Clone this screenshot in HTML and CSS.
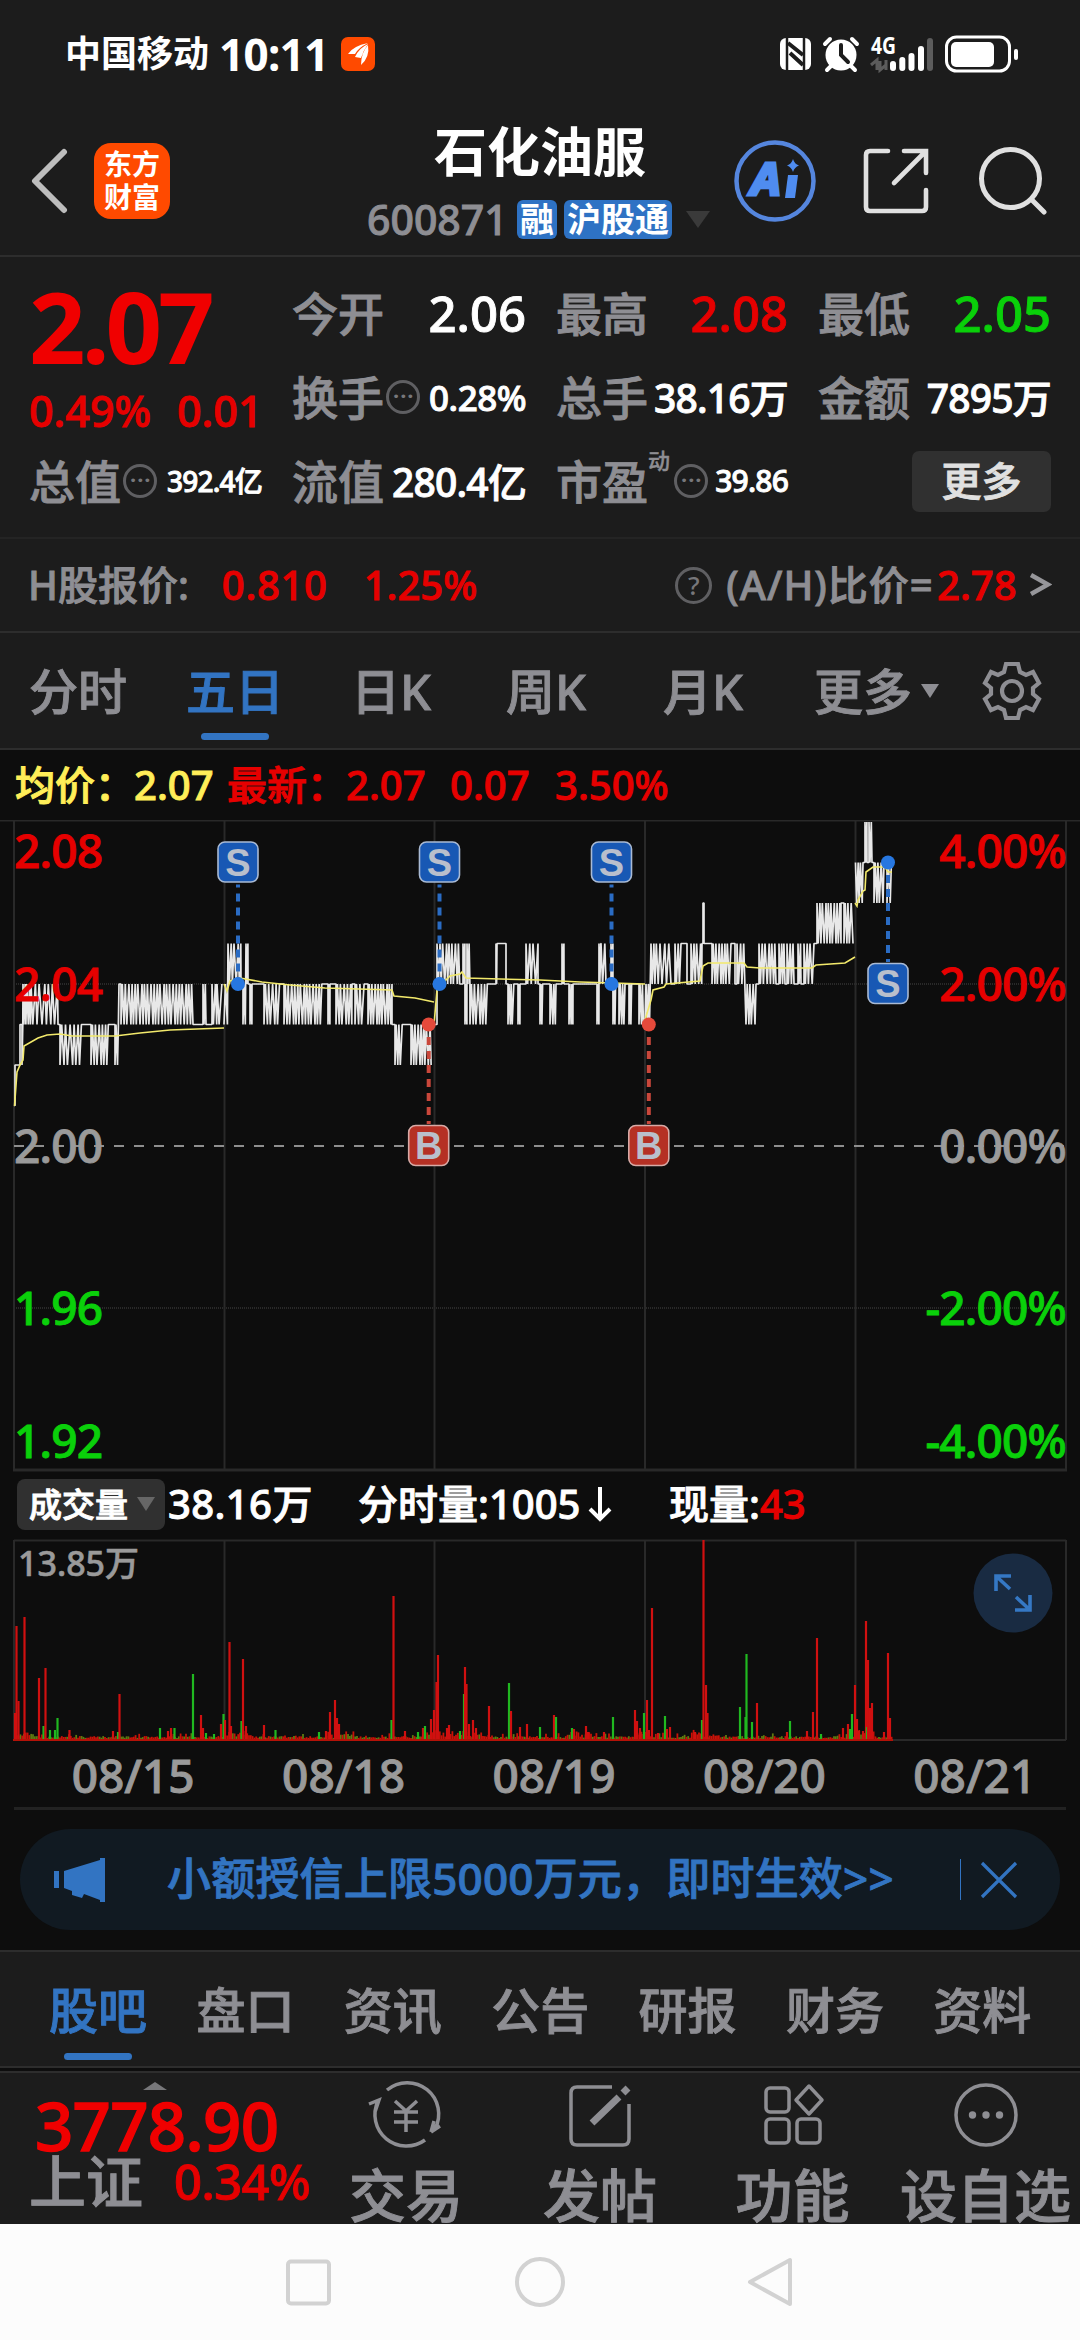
FILE: index.html
```html
<!DOCTYPE html>
<html lang="zh-CN">
<head>
    <meta charset="UTF-8">
    <meta name="viewport" content="width=device-width, initial-scale=1.0">
    <title>石化油服 600871</title>
    <link rel="stylesheet" href="styles.css">
</head>
<body>
    <div class="statusbar">
        <span class="carrier">中国移动</span>
        <span class="clock">10:11</span>
        <svg class="push-icon" width="34" height="34" viewBox="0 0 34 34">
            <rect width="34" height="34" rx="7" fill="#ff4a00"/>
            <path d="M7 17Q12 9 27 6Q17 11 14 17ZM14 20Q18 11 27 7Q22 14 20 21ZM20 28Q20 16 27 8Q29 20 20 28Z" fill="#fff"/>
        </svg>
        <svg class="status-icons" width="240" height="40" viewBox="0 0 240 40">
            <rect x="0" y="4" width="31" height="32" rx="6" fill="#fff"/>
            <path d="M7 3V36M24 4V37" stroke="#1c1c1c" stroke-width="2.5"/>
            <path d="M8 9L23 21M10 19L23 31" stroke="#1c1c1c" stroke-width="4"/>
            <circle cx="61" cy="21" r="15.5" fill="#fff"/>
            <path d="M45 10L50 5M77 10L72 5M47 36L52 31M75 36L70 31" stroke="#fff" stroke-width="4" stroke-linecap="round"/>
            <path d="M61 11V21L68 28" stroke="#1c1c1c" stroke-width="4" fill="none" stroke-linecap="round"/>
            <text class="net" x="91" y="20" textLength="25" lengthAdjust="spacingAndGlyphs">4G</text>
            <path d="M91 31L97 26V36M106 36V26M100 27V36L106 31" stroke="#5c5c5c" stroke-width="3" fill="none"/>
            <path d="M113 30V34M122.300 26V34M131.500 22V34M141 15V34" stroke="#fff" stroke-width="6" stroke-linecap="round"/>
            <path d="M150 7V34" stroke="#5c5c5c" stroke-width="6" stroke-linecap="round"/>
            <rect x="166.500" y="3" width="63" height="34" rx="10" fill="none" stroke="#fff" stroke-width="3"/>
            <rect x="171" y="8" width="43" height="25" rx="5" fill="#fff"/>
            <rect x="234" y="15" width="4" height="11" rx="2" fill="#fff"/>
        </svg>
    </div>

    <div class="header">
        <svg class="back" width="38" height="66" viewBox="0 0 38 66">
            <path d="M34 4L5 33L34 62" fill="none" stroke="#bdbdbd" stroke-width="6" stroke-linecap="round" stroke-linejoin="round"/>
        </svg>
        <div class="brand"><span>东方</span><span>财富</span></div>
        <div class="title">
            <h1>石化油服</h1>
            <div class="code">
                <span>600871</span>
                <b class="tag">融</b>
                <b class="tag">沪股通</b>
                <i class="tri tri-code"></i>
            </div>
        </div>
        <div class="header-icons">
            <svg width="82" height="82" viewBox="0 0 82 82">
                <circle cx="41" cy="41" r="38.500" fill="none" stroke="#5586de" stroke-width="4.500"/>
                <text class="ai" x="17" y="55" textLength="30" lengthAdjust="spacingAndGlyphs">A</text>
                <path d="M54 35H64L61 58H51Z" fill="#4f8cf0"/>
                <path d="M59 19Q60.500 24 65 25.500Q60.500 27 59 32Q57.500 27 53 25.500Q57.500 24 59 19Z" fill="#4f8cf0"/>
            </svg>
            <svg width="66" height="66" viewBox="0 0 66 66">
                <path d="M25 3H7Q3 3 3 7V59Q3 63 7 63H59Q63 63 63 59V42M41 3H63V25M62 4L31 35" fill="none" stroke="#e0e0e0" stroke-width="4.600" stroke-linecap="round"/>
            </svg>
            <svg width="68" height="68" viewBox="0 0 68 68">
                <circle cx="31.500" cy="31.500" r="29" fill="none" stroke="#e0e0e0" stroke-width="5"/>
                <path d="M53 53L65 65" stroke="#e0e0e0" stroke-width="5" stroke-linecap="round"/>
            </svg>
        </div>
    </div>

    <div class="quote">
        <div class="price">
            <div class="last">2.07</div>
            <div class="change"><span>0.49%</span><span>0.01</span></div>
        </div>
        <div class="cell c-open"><label>今开</label><span class="v-lg">2.06</span></div>
        <div class="cell"><label>最高</label><span class="v-lg red">2.08</span></div>
        <div class="cell"><label>最低</label><span class="v-lg green">2.05</span></div>
        <div class="cell"><label>换手</label><i class="dots">•••</i><span class="v-sm">0.28%</span></div>
        <div class="cell"><label>总手</label><span class="v-md">38.16万</span></div>
        <div class="cell"><label>金额</label><span class="v-md">7895万</span></div>
        <div class="cell"><label>总值</label><i class="dots">•••</i><span class="v-xs">392.4亿</span></div>
        <div class="cell"><label>流值</label><span class="v-md">280.4亿</span></div>
        <div class="cell"><label>市盈</label><sup>动</sup><i class="dots">•••</i><span class="v-xs pe">39.86</span></div>
        <div class="cell"><button class="more">更多</button></div>
    </div>

    <div class="hshare">
        <span class="grey">H股报价:</span>
        <span class="red h-price">0.810</span>
        <span class="red h-rate">1.25%</span>
        <i class="help">?</i>
        <span class="grey ratio">(A/H)比价=</span><span class="red h-ah">2.78</span>
        <svg width="24" height="28" viewBox="0 0 24 28"><path d="M3 4L20 13.500L3 23" fill="none" stroke="#96969a" stroke-width="4.500"/></svg>
    </div>

    <div class="tabs">
        <span>分时</span>
        <span class="active">五日</span>
        <span>日K</span>
        <span>周K</span>
        <span>月K</span>
        <span class="tab-more">更多<i class="tri tri-tab"></i></span>
        <svg width="60" height="62" viewBox="-30 -31 60 62" fill="none" stroke="#8e8e93" stroke-width="4.200">
            <path d="M-6 -27H6L8 -19L14 -16L21 -19L27 -8L21 -3V3L27 8L21 19L14 16L8 19L6 27H-6L-8 19L-14 16L-21 19L-27 8L-21 3V-3L-27 -8L-21 -19L-14 -16L-8 -19Z"/>
            <circle r="10"/>
        </svg>
    </div>

    <div class="info">
        <span class="yellow">均价：</span><span class="yellow i-avg">2.07</span>
        <span class="red i-new">最新：</span><span class="red i-last">2.07</span>
        <span class="red i-diff">0.07</span>
        <span class="red i-rate">3.50%</span>
    </div>

    <svg id="priceChart" class="chart" width="1080" height="652" viewBox="0 820 1080 652"></svg>

    <div class="volinfo">
        <span class="vol-btn">成交量<i class="tri tri-vol"></i></span>
        <span class="n-total">38.16万</span>
        <span class="n-minute">分时量:1005<svg width="24" height="36" viewBox="0 0 24 36"><path d="M12 1V32M2 23L12 33L22 23" fill="none" stroke="#fff" stroke-width="4"/></svg></span>
        <span class="n-now">现量:<b class="red">43</b></span>
    </div>

    <div class="volume">
        <svg id="volChart" class="chart" width="1080" height="204" viewBox="0 1538 1080 204"></svg>
        <svg class="expand" width="80" height="80" viewBox="-40 -40 80 80">
            <circle r="39.500" fill="#192b42"/>
            <path d="M-2 -16H-17V-1M-17 -16L-3 -3M2 18H17V3M17 18L3 5" transform="translate(0 -1)" fill="none" stroke="#3578c4" stroke-width="3.600"/>
        </svg>
    </div>

    <div class="dates">
        <span>08/15</span><span>08/18</span><span>08/19</span><span>08/20</span><span>08/21</span>
    </div>

    <div class="banner">
        <svg class="horn" width="52" height="46" viewBox="0 0 52 46" fill="#3274c2">
            <path d="M0 14H5V31H0ZM10 14L46 3V1H51V45H46V43L30 37L28 41L18 38V34L10 31Z"/>
        </svg>
        <span class="banner-text">小额授信上限5000万元，即时生效&gt;&gt;</span>
        <i class="bar"></i>
        <svg class="close" width="38" height="38" viewBox="0 0 38 38"><path d="M2 2L36 36M36 2L2 36" stroke="#3274c2" stroke-width="3.200"/></svg>
    </div>

    <div class="subtabs">
        <span class="active">股吧</span><span>盘口</span><span>资讯</span><span>公告</span><span>研报</span><span>财务</span><span>资料</span>
    </div>

    <div class="toolbar">
        <div class="index">
            <i class="tri-up"></i>
            <div class="index-value">3778.90</div>
            <div class="index-row"><span>上证</span><b>0.34%</b></div>
        </div>
        <div class="tool t1">
            <svg width="76" height="70" viewBox="-38 -35 76 70">
                <path d="M-19 -25A31.500 31.500 0 0 1 29 14M19 25A31.500 31.500 0 0 1 -28 -14M-37 -11L-27 -15L-31 -3M25 17L28 6M25 17L34 11"/>
                <path d="M-11 -14L0 -4L11 -14M0 -4V17M-12 -3H12M-12 7H12"/>
            </svg>
            <span>交易</span>
        </div>
        <div class="tool t2">
            <svg width="76" height="70" viewBox="-38 -35 76 70">
                <path d="M12 -28H-23Q-29 -28 -29 -22V24Q-29 30 -23 30H23Q29 30 29 24V-11"/>
                <path class="pen" d="M-8 8L19 -18M23 -22L28 -27"/>
            </svg>
            <span>发帖</span>
        </div>
        <div class="tool t3">
            <svg width="76" height="70" viewBox="-38 -35 76 70">
                <rect x="-27" y="-27" width="23" height="24" rx="4"/>
                <rect x="-27" y="4" width="23" height="24" rx="4"/>
                <rect x="4" y="4" width="23" height="24" rx="4"/>
                <path d="M16 -29L29 -15L16 -1L3 -15Z" stroke-linejoin="round"/>
            </svg>
            <span>功能</span>
        </div>
        <div class="tool t4">
            <svg width="76" height="70" viewBox="-38 -35 76 70">
                <circle r="30"/>
                <g fill="#8e8e93" stroke="none"><circle cx="-13.500" r="3.700"/><circle r="3.700"/><circle cx="13.500" r="3.700"/></g>
            </svg>
            <span>设自选</span>
        </div>
    </div>

    <div class="navbar">
        <svg width="52" height="52" viewBox="-26 -26 52 52"><rect x="-21" y="-20.500" width="41" height="42" rx="3"/></svg>
        <svg width="52" height="52" viewBox="-26 -26 52 52"><circle r="23"/></svg>
        <svg width="52" height="52" viewBox="-26 -26 52 52"><path d="M-20 0L20 -22V22Z" stroke-linejoin="round"/></svg>
    </div>

    <script src="chart.js"></script>
</body>
</html>
```
FILE: styles.css
```css
* {
    box-sizing: border-box;
}

body {
    margin: 0;
    width: 1080px;
    height: 2340px;
    overflow: hidden;
    background: #0d0d0d;
    color: #fff;
    font-family: "Noto Sans", "Noto Sans CJK SC", sans-serif;
    font-weight: 500;
    line-height: 1;
    white-space: nowrap;
    -webkit-text-stroke: 0.9px currentColor;
}

svg {
    display: block;
    flex: none;
}

svg text {
    -webkit-text-stroke: 0;
}

i {
    font-style: normal;
}

.red { color: #e60000; }
.green { color: #0ad00a; }
.yellow { color: #ffee58; }
.grey { color: #8e8e93; }

.tri {
    display: block;
    width: 0;
    height: 0;
    border-style: solid;
    border-color: transparent;
    border-bottom: 0;
}

/* 状态栏 */
.statusbar {
    height: 108px;
    padding-left: 65px;
    display: flex;
    align-items: center;
    background: #1c1c1c;
    -webkit-text-stroke: 0;
}

.carrier {
    width: 154px;
    font-size: 36px;
    font-weight: 700;
}

.clock {
    width: 122px;
    font-size: 44px;
    font-weight: 700;
    letter-spacing: -0.7px;
}

.status-icons {
    margin-left: 405px;
}

.net {
    font-size: 23px;
    font-weight: 700;
    fill: #fff;
}

/* 标题 */
.header {
    height: 149px;
    padding-left: 30px;
    display: flex;
    background: #1c1c1c;
    border-bottom: 2px solid #2d2d2d;
}

.back {
    margin-top: 40px;
}

.brand {
    width: 76px;
    height: 76px;
    margin: 35px 0 0 26px;
    padding-top: 5px;
    border-radius: 17px;
    background: #ff4a00;
    font-size: 28px;
    font-weight: 700;
    line-height: 33px;
    text-align: center;
    -webkit-text-stroke: 0;
}

.brand span {
    display: block;
}

.title {
    width: 346px;
    margin-left: 197px;
}

h1 {
    margin: 9px 0 0 67px;
    font-size: 53px;
    font-weight: 700;
    line-height: 70px;
    -webkit-text-stroke: 0;
}

.code {
    margin-top: 12px;
    display: flex;
    align-items: center;
    color: #8e8e93;
    font-size: 41px;
    line-height: 40px;
}

.code span {
    width: 150px;
}

.tag {
    height: 39px;
    margin-right: 7px;
    padding: 0 3px;
    border-radius: 6px;
    background: #2e72c4;
    color: #fff;
    font-size: 34px;
    font-weight: 700;
    line-height: 38px;
    -webkit-text-stroke: 0;
}

.tri-code {
    margin-left: 7px;
    border-width: 17px 12.5px 0;
    border-top-color: #3a3a3a;
}

.header-icons {
    height: 146px;
    margin-left: 21px;
    display: flex;
    align-items: center;
}

.header-icons svg:nth-child(2) {
    margin: 0 50px 0 47px;
}

.header-icons .ai {
    font-size: 45px;
    font-style: italic;
    font-weight: 700;
    fill: #4f8cf0;
    stroke: #4f8cf0;
    stroke-width: 3px;
    -webkit-text-stroke: 3px #4f8cf0;
}

/* 行情 */
.quote {
    height: 280px;
    padding: 14px 28px 0 29px;
    display: grid;
    grid-template-columns: 233px 234px 232px 233px;
    grid-template-rows: 84px 84px 84px;
    column-gap: 30px;
    background: #1c1c1c;
}

.price {
    grid-row: 1 / 3;
    color: #e60000;
}

.last {
    height: 115px;
    color: #f00000;
    font-size: 99px;
    font-weight: 700;
    line-height: 109px;
    letter-spacing: -4px;
    -webkit-text-stroke: 0;
}

.change {
    font-size: 43px;
    line-height: 50px;
}

.change span:first-child {
    display: inline-block;
    width: 148px;
}

.cell {
    display: flex;
    align-items: center;
    justify-content: space-between;
}

label {
    color: #8e8e93;
    font-size: 46px;
}

.v-lg { font-size: 49px; }
.v-md { font-size: 39px; letter-spacing: -0.8px; }
.v-sm { font-size: 35px; letter-spacing: -0.5px; }
.v-xs { font-size: 28px; letter-spacing: -0.8px; }
.v-xs.pe { font-size: 30px; }

.dots,
.help {
    width: 34px;
    height: 34px;
    flex: none;
    border: 3px solid #5f5f62;
    border-radius: 50%;
    color: #77777a;
    font-size: 16px;
    line-height: 27px;
    text-align: center;
    -webkit-text-stroke: 0;
}

.dots {
    margin-left: 2px;
    margin-right: auto;
    font-family: "DejaVu Sans", sans-serif;
    font-size: 13px;
    letter-spacing: -0.5px;
}

.cell sup {
    width: 24px;
    margin: -42px 0 0;
    color: #8e8e93;
    font-size: 22px;
    -webkit-text-stroke: 0.4px currentColor;
}

.more {
    width: 139px;
    height: 61px;
    margin-left: auto;
    padding: 0;
    border: 0;
    border-radius: 7px;
    background: #303030;
    color: #e0e0e0;
    font: inherit;
    font-size: 40px;
    -webkit-text-stroke: 0.9px currentColor;
}

/* H股 */
.hshare {
    height: 96px;
    padding: 0 28px;
    display: flex;
    align-items: center;
    background: #1c1c1c;
    border-top: 2px solid #242424;
    border-bottom: 2px solid #2d2d2d;
    font-size: 40px;
}

.hshare .grey:first-child { width: 194px; }
.h-price { width: 142px; letter-spacing: 0.7px; }
.h-rate { width: 312px; }
.ratio { width: 211px; letter-spacing: 1px; }
.h-ah { width: 91px; }

.help {
    width: 37px;
    height: 37px;
    margin-right: 14px;
    font-size: 26px;
    line-height: 31px;
}

/* 周期 */
.tabs {
    height: 117px;
    padding-left: 29px;
    display: flex;
    align-items: center;
    background: #1c1c1c;
    border-bottom: 2px solid #2d2d2d;
    color: #8e8e93;
    font-size: 49px;
    line-height: 114px;
}

.tabs > span {
    width: 157px;
}

.tabs > span:nth-child(2) { width: 165px; }
.tabs > span:nth-child(3) { width: 155px; }
.tabs > span:nth-child(5) { width: 151px; }

.tabs .tab-more {
    width: 168px;
    display: flex;
    align-items: center;
}

.active {
    position: relative;
    color: #3274c2;
}

.active::after {
    content: "";
    position: absolute;
    left: 15px;
    bottom: 8px;
    width: 68px;
    height: 7px;
    border-radius: 4px;
    background: #3274c2;
}

.tri-tab {
    margin-left: 9px;
    border-width: 14px 9px 0;
    border-top-color: #8e8e93;
}

.info {
    height: 70px;
    padding-left: 15px;
    display: flex;
    align-items: center;
    font-size: 40px;
}

.info .yellow:first-child { width: 119px; }
.i-avg { width: 93px; }
.i-new { width: 119px; }
.i-last { width: 104px; }
.i-diff { width: 105px; }

/* 图表 */
.chart .axis {
    font-size: 46px;
    letter-spacing: -0.8px;
    stroke-width: 0.9px;
    -webkit-text-stroke: 0.9px;
}

.mark {
    font-family: "Liberation Sans", sans-serif;
    font-size: 38px;
    font-weight: 700;
    fill: #b9bfcc;
    text-anchor: middle;
}

.vol-max {
    font-size: 34px;
    fill: #9a9a9a;
    stroke: #9a9a9a;
    stroke-width: 0.6px;
}

.volinfo {
    height: 66px;
    padding: 0 0 2px 17px;
    display: flex;
    align-items: center;
    font-size: 40px;
}

.vol-btn {
    width: 148px;
    height: 51px;
    margin-right: 3px;
    padding-left: 12px;
    display: flex;
    align-items: center;
    border-radius: 8px;
    background: #303030;
    font-size: 33px;
}

.tri-vol {
    margin-left: 9px;
    border-width: 14px 9px 0;
    border-top-color: #666;
}

.n-total { width: 190px; letter-spacing: 0.4px; }

.n-minute {
    width: 311px;
    display: flex;
    align-items: center;
}

.n-minute svg { margin-left: 8px; }
.n-now b { font-weight: 500; }

.volume {
    position: relative;
}

.expand {
    position: absolute;
    left: 973px;
    top: 15px;
}

.dates {
    height: 68px;
    margin: 0 14px;
    padding-left: 14px;
    display: grid;
    grid-template-columns: repeat(5, 210.4px);
    align-items: center;
    border-bottom: 3px solid #222;
    color: #9a9a9a;
    font-size: 46px;
    line-height: 60px;
    text-align: center;
}

/* 公告条 */
.banner {
    height: 101px;
    margin: 19px 20px 20px;
    padding-left: 34px;
    display: flex;
    align-items: center;
    border-radius: 51px;
    background: #111a22;
    color: #3274c2;
    font-size: 44px;
}

.banner-text {
    width: 793px;
    margin: -3px 0 0 61px;
    letter-spacing: 0.2px;
}

.bar {
    width: 1px;
    height: 41px;
    margin-right: 19px;
    background: #3274c2;
}

.subtabs {
    height: 118px;
    padding-left: 49px;
    display: grid;
    grid-template-columns: repeat(7, 147.4px);
    background: #1c1c1c;
    border-top: 2px solid #2d2d2d;
    border-bottom: 2px solid #2d2d2d;
    color: #8e8e93;
    font-size: 49px;
    line-height: 116px;
}

/* 底部 */
.toolbar {
    height: 153px;
    margin-top: 3px;
    display: flex;
    overflow: hidden;
    border-top: 2px solid #2d2d2d;
    background: #1c1c1c;
    color: #8e8e93;
}

.index {
    width: 330px;
    padding: 9px 0 0 29px;
    color: #f00000;
}

.tri-up {
    display: block;
    width: 0;
    margin-left: 114px;
    border: 12px solid transparent;
    border-top: 0;
    border-bottom: 8px solid #77777a;
}

.index-value {
    height: 62px;
    padding-left: 6px;
    font-size: 67px;
    line-height: 70px;
    letter-spacing: -0.7px;
    -webkit-text-stroke: 1.4px currentColor;
}

.index-row {
    display: flex;
    align-items: center;
    line-height: 58px;
}

.index-row span {
    width: 145px;
    color: #8e8e93;
    font-size: 57px;
}

.index-row b {
    color: #e60000;
    font-size: 49px;
    font-weight: 500;
    letter-spacing: -0.6px;
}

.tool {
    display: flex;
    flex-direction: column;
    align-items: center;
    padding-top: 7px;
    font-size: 57px;
    line-height: 80px;
}

.tool svg {
    margin-bottom: 5px;
    fill: none;
    stroke: #8e8e93;
    stroke-width: 3.5;
}

.tool .pen {
    stroke-width: 7;
}

.t1 { width: 152px; }
.t2 { width: 236px; }
.t3 { width: 149px; }
.t4 { width: 237px; margin-right: -24px; }

.navbar {
    height: 116px;
    padding: 0 284px 0 283px;
    display: flex;
    align-items: center;
    justify-content: space-between;
    background: #fcfcfc;
}

.navbar svg {
    fill: none;
    stroke: #d2d2d2;
    stroke-width: 4;
}
```
FILE: chart.js
```js
const columns = [14, 224.5, 434.5, 645, 855.5, 1066];

const priceY = (p) => 1146 - (p - 200) * 40.5;

// [结束x, 价位a, 价位b, 步长]，只有一个价位时为横线
const days = [
    { start: 14, runs: [[15, 201], [20, 202], [22, 203], [23, 202, 203, 1], [31, 204, 203, 1.1], [58, 204, 203, 2.3], [60, 203], [82, 202, 203, 2.1], [91, 203], [110, 202, 203, 1.7], [115, 203], [119, 202, 203, 1.3], [121, 204], [193, 203, 204, 1.65], [203, 203], [206, 204, 203, 1.2], [212, 203], [217, 204, 203, 1.8], [223, 204, 203, 2.6]] },
    { start: 224, runs: [[228, 203, 204, 1.8], [241, 205, 204, 1.7], [243, 204], [246, 203, 204, 1.2], [248, 205, 204, 1], [250, 204], [252, 203, 204, 1], [264, 204], [280, 203, 204, 1.8], [284, 204], [322, 203, 204, 1.6], [328, 204], [330, 203, 204, 1], [336, 204], [352, 203, 204, 1.7], [355, 204], [365, 203, 204, 1.9], [368, 204], [392, 203, 204, 1.5], [395, 203], [403, 202, 203, 1.5], [411, 203], [432, 202, 203, 1.5]] },
    { start: 434, runs: [[437, 203], [461, 205, 204, 1.6], [463, 204], [465, 205, 204, 1], [467, 203, 204, 1], [470, 205, 204, 1.1], [488, 203, 204, 1.7], [496, 204], [497, 205, 204, 0.8], [506, 205], [508, 204], [514, 203, 204, 1.2], [518, 204], [520, 203, 204, 1], [526, 204], [538, 205, 204, 2], [540, 204], [543, 203, 204, 1], [550, 204], [556, 203, 204, 1.5], [562, 204], [564, 205, 204, 1], [569, 204], [573, 203, 204, 1.1], [597, 204], [599, 203, 204, 1], [601, 205, 204, 1], [606, 205, 204, 2], [611, 204], [613, 205, 204, 1], [616, 203, 204, 1], [619, 204], [625, 203, 204, 1.4], [629, 204], [632, 203, 204, 1], [639, 204], [644, 203, 204, 1.3]] },
    { start: 645, runs: [[651, 203, 204, 1.3], [660, 205, 204, 1.5], [671, 205, 204, 2.5], [675, 204], [682, 205, 204, 1.7], [687, 205], [691, 204], [702, 205, 204, 1.6], [703, 205], [704, 206], [706, 205], [712, 205], [732, 204, 205, 1.5], [735, 205], [737, 204], [746, 205, 204, 1.9], [757, 203, 204, 1.5], [759, 204], [776, 205, 204, 1.7], [779, 204], [785, 205, 204, 1.4], [787, 204], [794, 205, 204, 1.7], [798, 204], [801, 205, 204, 1.3], [804, 204], [814, 205, 204, 1.7], [817, 205], [841, 206, 205, 1.5], [844, 206], [854, 205, 206, 1.5]] },
    { start: 855.5, runs: [[863, 207, 206, 1.4], [865, 207], [867, 208, 207, 1], [869, 207], [872, 208, 207, 1.2], [874, 207], [884, 206, 207, 1.5], [887, 207], [892, 206, 207, 1.7]] }
];

const averages = [
    '14.5,1106 17,1072 20,1065 23,1060 24,1046 38,1038 47,1035 60,1034 72,1036 115,1036 140,1033 170,1030 224,1028',
    '224,984 227,991 230,981 240,978 262,982 290,985 325,988 392,990 394,996 415,998 434,1002',
    '434,1025 437,990 442,984 450,976 460,974 462,972 466,978 500,979 540,980 580,982 645,984',
    '645,1020 651,1000 653,990 664,987 666,984 700,981 703,966 708,963 744,963 747,967 760,968 812,968 816,965 845,963 855,957',
    '855,903 857,906 858,900 863,891 865,890 866,872 873,867 885,867 888,872 892,872'
];

// 买卖点 [类型, x, 成交价, 标签价]
const trades = [
    ['S', 238, 204, 207], ['S', 439.5, 204, 207], ['S', 611.5, 204, 207], ['S', 888, 207, 204],
    ['B', 428.7, 203, 200], ['B', 648.8, 203, 200]
];

function pricePath(day) {
    let x = day.start;
    let d = '';
    day.runs.forEach(([end, a, b, step]) => {
        if (!b) {
            d += ` ${x},${priceY(a)} ${end},${priceY(a)}`;
        } else {
            // 实际成交并不均匀，步长做一点扰动
            for (let i = 0; x <= end; i++) {
                d += ` ${x.toFixed(1)},${priceY(i % 2 ? b : a)}`;
                x += step * [0.8, 1.1, 0.7, 0.9, 1.3, 1.2, 0.7][i % 7];
            }
        }
        x = end;
    });
    return d;
}

function drawPrice() {
    let s = '<g stroke="#292929" stroke-width="2"><path d="M0 820.5H1080"/>';
    s += columns.map(x => `<path d="M${x} 821V1470"/>`).join('');
    s += '<path d="M13 1470H1067" stroke-width="3"/></g>';
    s += '<path d="M14 984H1066M14 1308H1066" stroke="#292929" stroke-width="2" stroke-dasharray="1 1"/>';
    days.forEach((day, i) => {
        s += `<polyline points="${pricePath(day)}" fill="none" stroke="#e8e8e8" stroke-width="1.7" stroke-linejoin="bevel"/>`;
        s += `<polyline points="${averages[i]}" fill="none" stroke="#f2e96b" stroke-width="1.6"/>`;
    });
    s += '<path d="M14 1146H1066" stroke="#8e8e8e" stroke-width="2" stroke-dasharray="10 10"/>';

    const labels = [[868, '2.08', '4.00%', '#e60000'], [1001, '2.04', '2.00%', '#e60000'], [1163, '2.00', '0.00%', '#9a9a9a'],
        [1325, '1.96', '-2.00%', '#0ad00a'], [1458, '1.92', '-4.00%', '#0ad00a']];
    labels.forEach(([y, left, right, color]) => {
        s += `<text class="axis" x="14" y="${y}" fill="${color}" stroke="${color}">${left}</text>`;
        s += `<text class="axis" x="1066" y="${y}" fill="${color}" stroke="${color}" text-anchor="end">${right}</text>`;
    });

    trades.forEach(([type, x, price, tag]) => {
        const sell = type === 'S';
        const y = priceY(price);
        const ty = priceY(tag);
        const dir = ty < y ? 1 : -1;
        s += `<path d="M${x} ${ty + dir * 22}V${y}" stroke="${sell ? '#2a6cc4' : '#c9473b'}" stroke-width="4" stroke-dasharray="8 6" stroke-dashoffset="5"/>`;
        s += `<circle cx="${x}" cy="${y}" r="7" fill="${sell ? '#2777e0' : '#e54a3b'}"/>`;
        s += `<rect x="${x - 20}" y="${ty - 20.5}" width="40" height="40" rx="7" fill="${sell ? '#1858b4' : '#b53024'}" stroke="${sell ? '#a9bad4' : '#d8aaa6'}" stroke-width="1.6"/>`;
        s += `<text class="mark" x="${x}" y="${ty + 13}">${type}</text>`;
    });
    document.getElementById('priceChart').innerHTML = s;
}

// [x, 高度]，负数为绿色
const bars = [
    [15, 27], [16.5, 114], [18.5, 39], [24.5, 123], [39, 62], [43.5, -14], [45.5, 72], [50, -10], [55, -10], [57.5, -22], [69.5, 10],
    [113, 9], [118, -8], [119.5, 46], [160, -12], [168, 9], [171, 12], [174.5, -12], [193, -66], [201, 25], [203, 12], [206, -7], [214, -6],
    [221, 16], [223.5, -26], [225, 20], [229.5, 98], [231, 14], [241.5, -19], [243, 81], [246, 14], [264, 15], [275.5, -10], [319, -8],
    [326, 9], [330, 28], [335, 40], [337, 22], [339, 16], [391.5, -20], [393.5, 144], [405, 9], [418, -8], [423, 12], [425, -14],
    [431, 21], [434, 30], [436.5, 58], [438, 85], [447, 12], [449, 15], [460, -9], [464, -46], [465, 73], [466.5, 56], [469, 16],
    [473, 20], [476, 12], [489, 34], [509, -57], [511, 29], [520, 13], [527, 16], [540, -13], [554, 25], [556, -23], [572, -12], [574, 11],
    [586, 14], [588, 8], [604, 8], [613, -23], [635, 30], [637, 19], [640, 12], [644, -27], [647, 40], [649, 10], [652, 132], [658, 7],
    [665, -24], [667, 11], [670, 13], [695, 8], [702, -20], [703.5, 200], [706, 55], [707.5, 27], [740, -33], [745.5, -23],
    [746.5, -86], [752, -18], [757, 37], [787, 8], [790, -19], [807, 9], [813, 28], [817, 102], [821, -6], [843, 12], [848, 16],
    [850, -11], [852, -26], [855, 55], [857, 21], [859, 9], [863, 9], [866, 119], [867, -13], [868, 80], [870, 32], [872, 37],
    [884, 8], [888, 87], [890, 22]
];

function drawVolume() {
    let s = '<g stroke="#292929" stroke-width="2"><path d="M14 1540.5H1066M14 1740H1066"/>';
    s += columns.map(x => `<path d="M${x} 1540V1740"/>`).join('') + '</g>';
    let seed = 7;
    for (let x = 15; x < 893; x += 1.8) {
        seed = (seed * 137 + 59) % 1009;
        const busy = [18, 238, 340, 440, 470, 580, 650, 705, 860].some(c => Math.abs(x - c) < 14);
        const h = 2 + (seed % 97) / 97 * (seed % 5 === 0 ? 5 : 2) + (busy ? seed % 6 : 0);
        s += `<path d="M${x.toFixed(1)} 1740V${(1740 - h).toFixed(1)}" stroke="${seed % 3 === 0 ? '#5e7a10' : '#c81208'}" stroke-width="1.8"/>`;
    }
    bars.forEach(([x, h]) => {
        s += `<path d="M${x} 1740V${1740 - Math.abs(h)}" stroke="${h < 0 ? '#20b820' : '#d01010'}" stroke-width="2.2"/>`;
    });
    s += '<path d="M13 1740H893" stroke="#b41208" stroke-width="2"/>';
    s += '<text class="vol-max" x="18" y="1576">13.85万</text>';
    document.getElementById('volChart').innerHTML = s;
}

drawPrice();
drawVolume();
```
